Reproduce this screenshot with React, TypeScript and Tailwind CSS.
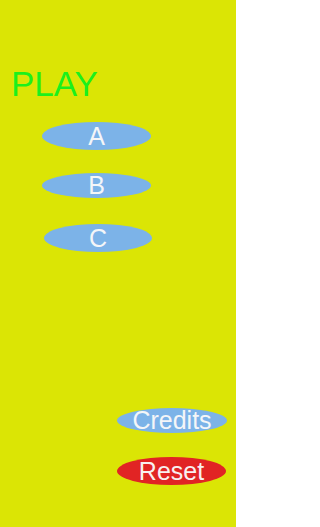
export default function App() {
  return (
    <div
      className="flex min-h-screen w-[236px] flex-col bg-[#dbe505]"
      style={{ fontFamily: '"Liberation Sans", Arial, sans-serif' }}
    >
      {/* Title */}
      <div className="ml-[11px] mt-[66px] text-[35px] leading-[35px] text-[#1cf01c]">
        PLAY
      </div>

      {/* Level buttons */}
      <button className="ml-[42px] mt-[21px] flex h-[28px] w-[109px] items-center justify-center rounded-[50%] bg-[#7cb3e8] text-[25px] leading-none text-[#f4f6f8]">
        A
      </button>
      <button className="ml-[42px] mt-[23px] flex h-[25px] w-[109px] items-center justify-center rounded-[50%] bg-[#7cb3e8] text-[25px] leading-none text-[#f4f6f8]">
        B
      </button>
      <button className="ml-[44px] mt-[26px] flex h-[28px] w-[108px] items-center justify-center rounded-[50%] bg-[#7cb3e8] text-[25px] leading-none text-[#f4f6f8]">
        C
      </button>

      {/* Bottom actions */}
      <div className="mt-[156px] flex flex-col items-end pr-[9px]">
        <button className="flex h-[25px] w-[110px] items-center justify-center rounded-[50%] bg-[#7cb3e8] text-[25px] leading-none text-[#f4f6f8]">
          Credits
        </button>
        <button className="mr-[1px] mt-[24px] flex h-[28px] w-[109px] items-center justify-center rounded-[50%] bg-[#e12424] text-[25px] leading-none text-[#f8f0f0]">
          Reset
        </button>
      </div>
    </div>
  );
}
